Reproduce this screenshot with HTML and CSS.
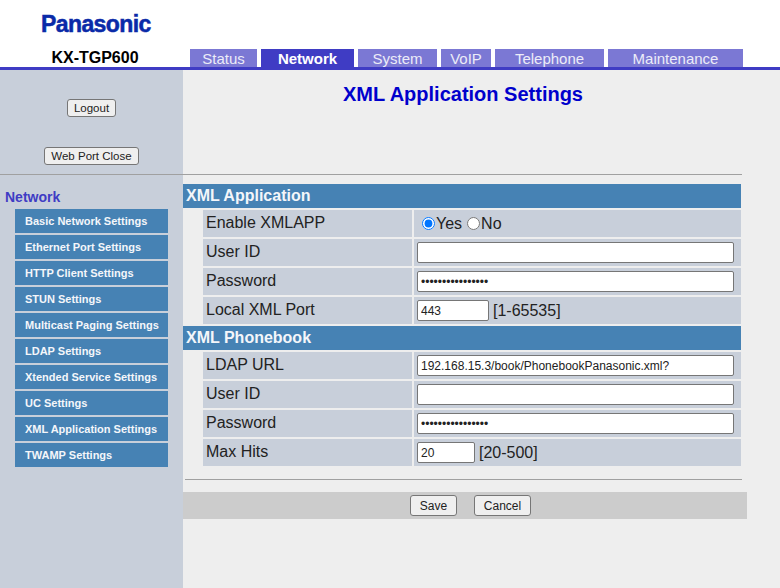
FILE: index.html
```html
<!DOCTYPE html>
<html>
<head>
    <title>XML Application Settings</title>
    <link rel="stylesheet" href="styles.css">
</head>
<body>
    <div class="header">
        <div class="logo">Panasonic</div>
        <div class="header-bar">
            <div class="model">KX-TGP600</div>
            <div class="tabs">
                <a class="tab tab-status">Status</a>
                <a class="tab tab-network active">Network</a>
                <a class="tab tab-system">System</a>
                <a class="tab tab-voip">VoIP</a>
                <a class="tab tab-telephone">Telephone</a>
                <a class="tab tab-maintenance">Maintenance</a>
            </div>
        </div>
    </div>

    <div class="page">
        <div class="sidebar">
            <div class="side-buttons">
                <button class="btn">Logout</button>
                <button class="btn">Web Port Close</button>
            </div>
            <div class="side-title">Network</div>
            <div class="side-menu">
                <a class="side-item">Basic Network Settings</a>
                <a class="side-item">Ethernet Port Settings</a>
                <a class="side-item">HTTP Client Settings</a>
                <a class="side-item">STUN Settings</a>
                <a class="side-item">Multicast Paging Settings</a>
                <a class="side-item">LDAP Settings</a>
                <a class="side-item">Xtended Service Settings</a>
                <a class="side-item">UC Settings</a>
                <a class="side-item">XML Application Settings</a>
                <a class="side-item">TWAMP Settings</a>
            </div>
        </div>

        <div class="main">
            <h1 class="title">XML Application Settings</h1>
            <div class="rule rule-top"></div>

            <div class="section-head">XML Application</div>
            <div class="row">
                <div class="label">Enable XMLAPP</div>
                <div class="value">
                    <input type="radio" name="enable" class="radio" checked><span class="radio-text">Yes</span>
                    <input type="radio" name="enable" class="radio"><span>No</span>
                </div>
            </div>
            <div class="row">
                <div class="label">User ID</div>
                <div class="value"><input type="text" class="field"></div>
            </div>
            <div class="row">
                <div class="label">Password</div>
                <div class="value"><input type="password" class="field" value="1234567890123456"></div>
            </div>
            <div class="row">
                <div class="label">Local XML Port</div>
                <div class="value"><input type="text" class="field field-port" value="443"><span>[1-65535]</span></div>
            </div>

            <div class="section-head">XML Phonebook</div>
            <div class="row">
                <div class="label">LDAP URL</div>
                <div class="value"><input type="text" class="field" value="192.168.15.3/book/PhonebookPanasonic.xml?"></div>
            </div>
            <div class="row">
                <div class="label">User ID</div>
                <div class="value"><input type="text" class="field"></div>
            </div>
            <div class="row">
                <div class="label">Password</div>
                <div class="value"><input type="password" class="field" value="1234567890123456"></div>
            </div>
            <div class="row">
                <div class="label">Max Hits</div>
                <div class="value"><input type="text" class="field field-hits" value="20"><span>[20-500]</span></div>
            </div>

            <div class="rule rule-bottom"></div>
            <div class="save-bar">
                <button class="btn btn-save">Save</button>
                <button class="btn btn-cancel">Cancel</button>
            </div>
        </div>
    </div>
</body>
</html>
```

FILE: styles.css
```css
html, body {
    margin: 0;
    height: 100%;
    overflow: hidden;
}

body {
    display: flex;
    flex-direction: column;
    background-color: #eeeeee;
    font-family: "Liberation Sans", Arial, sans-serif;
    color: #222222;
}

/* Header */
.header {
    height: 67px;
    background-color: #ffffff;
    border-bottom: 3px solid #3f3cc4;
    display: flex;
    flex-direction: column;
    justify-content: space-between;
    flex-shrink: 0;
}

.logo {
    margin: 11px 0 0 41px;
    font-size: 23px;
    line-height: 26px;
    font-weight: bold;
    letter-spacing: -0.6px;
    color: #0a2aa8;
    -webkit-text-stroke: 0.5px #0a2aa8;
}

.header-bar {
    display: flex;
    align-items: flex-end;
}

.model {
    width: 190px;
    text-align: center;
    font-size: 16px;
    line-height: 19px;
    font-weight: bold;
    color: #000000;
}

.tabs {
    display: flex;
    gap: 4px;
}

.tab {
    height: 17px;
    padding-top: 1px;
    text-align: center;
    font-size: 15px;
    line-height: 18px;
    color: #ececf8;
    background-color: #7b78d4;
    box-sizing: content-box;
}

.tab.active {
    background-color: #3f3cc4;
    color: #ffffff;
    font-weight: bold;
}

.tab-status { width: 67px; }
.tab-network { width: 93px; }
.tab-system { width: 79px; }
.tab-voip { width: 50px; }
.tab-telephone { width: 109px; }
.tab-maintenance { width: 135px; }

/* Sidebar and main area */
.page {
    flex: 1;
    display: flex;
    min-height: 0;
}

.sidebar {
    width: 183px;
    flex-shrink: 0;
    background-color: #c8cfda;
}

.side-buttons {
    height: 105px;
    border-bottom: 1px solid #a0a0a0;
    display: flex;
    flex-direction: column;
    align-items: center;
    gap: 30px;
    padding-top: 29px;
    box-sizing: border-box;
}

.btn {
    height: 18px;
    padding: 0 6px;
    font-family: "Liberation Sans", Arial, sans-serif;
    font-size: 11.5px;
    color: #222222;
    background-color: #efefef;
    border: 1px solid #767676;
    border-radius: 3px;
}

.side-title {
    margin: 14px 0 4px 5px;
    font-size: 14px;
    line-height: 16px;
    font-weight: bold;
    color: #3f3cc4;
}

.side-menu {
    display: flex;
    flex-direction: column;
    gap: 2px;
    margin-left: 15px;
    width: 153px;
}

.side-item {
    height: 24px;
    padding-left: 10px;
    font-size: 11px;
    line-height: 24px;
    font-weight: bold;
    color: #f4f6fa;
    background-color: #4682b4;
}

.main {
    width: 564px;
}

.title {
    margin: 0;
    height: 105px;
    padding-top: 12px;
    padding-right: 4px;
    box-sizing: border-box;
    text-align: center;
    font-size: 20px;
    line-height: 24px;
    font-weight: bold;
    color: #0000cc;
}

.rule {
    height: 1px;
    background-color: #a0a0a0;
}

.rule-top {
    margin: 0 5px 9px 0;
    margin-top: -1px;
}

.rule-bottom {
    margin: 13px 5px 12px 2px;
}

.section-head {
    width: 558px;
    height: 24px;
    padding-left: 3px;
    box-sizing: border-box;
    font-size: 16px;
    line-height: 24px;
    font-weight: bold;
    color: #f4f6fa;
    background-color: #4682b4;
}

.section-head + .row {
    margin-top: 2px;
}

.row {
    width: 538px;
    margin-left: 20px;
    margin-bottom: 2px;
    display: flex;
    gap: 2px;
    height: 27px;
}

.label {
    width: 209px;
    padding-left: 3px;
    box-sizing: border-box;
    font-size: 16px;
    line-height: 26px;
    background-color: #c8cfda;
}

.value {
    flex: 1;
    display: flex;
    align-items: center;
    padding-left: 3px;
    font-size: 16px;
    background-color: #c8cfda;
}

.field {
    width: 317px;
    height: 21px;
    margin: 0;
    padding: 1px 3px;
    box-sizing: border-box;
    font-family: "Liberation Sans", Arial, sans-serif;
    font-size: 12px;
    color: #222222;
    background-color: #ffffff;
    border: 1px solid #767676;
    border-radius: 2px;
}

.field-port {
    width: 72px;
    margin-right: 4px;
}

.field-hits {
    width: 58px;
    margin-right: 4px;
}

.radio {
    margin: 0 1px 0 5px;
    width: 13px;
    height: 13px;
}

.radio-text {
    margin-right: 0;
}

.save-bar {
    height: 27px;
    display: flex;
    align-items: center;
    justify-content: center;
    gap: 17px;
    padding-left: 11px;
    box-sizing: border-box;
    background-color: #cccccc;
}

.btn-save, .btn-cancel {
    height: 21px;
    font-size: 12px;
}

.btn-save { width: 47px; }
.btn-cancel { width: 57px; }
```
